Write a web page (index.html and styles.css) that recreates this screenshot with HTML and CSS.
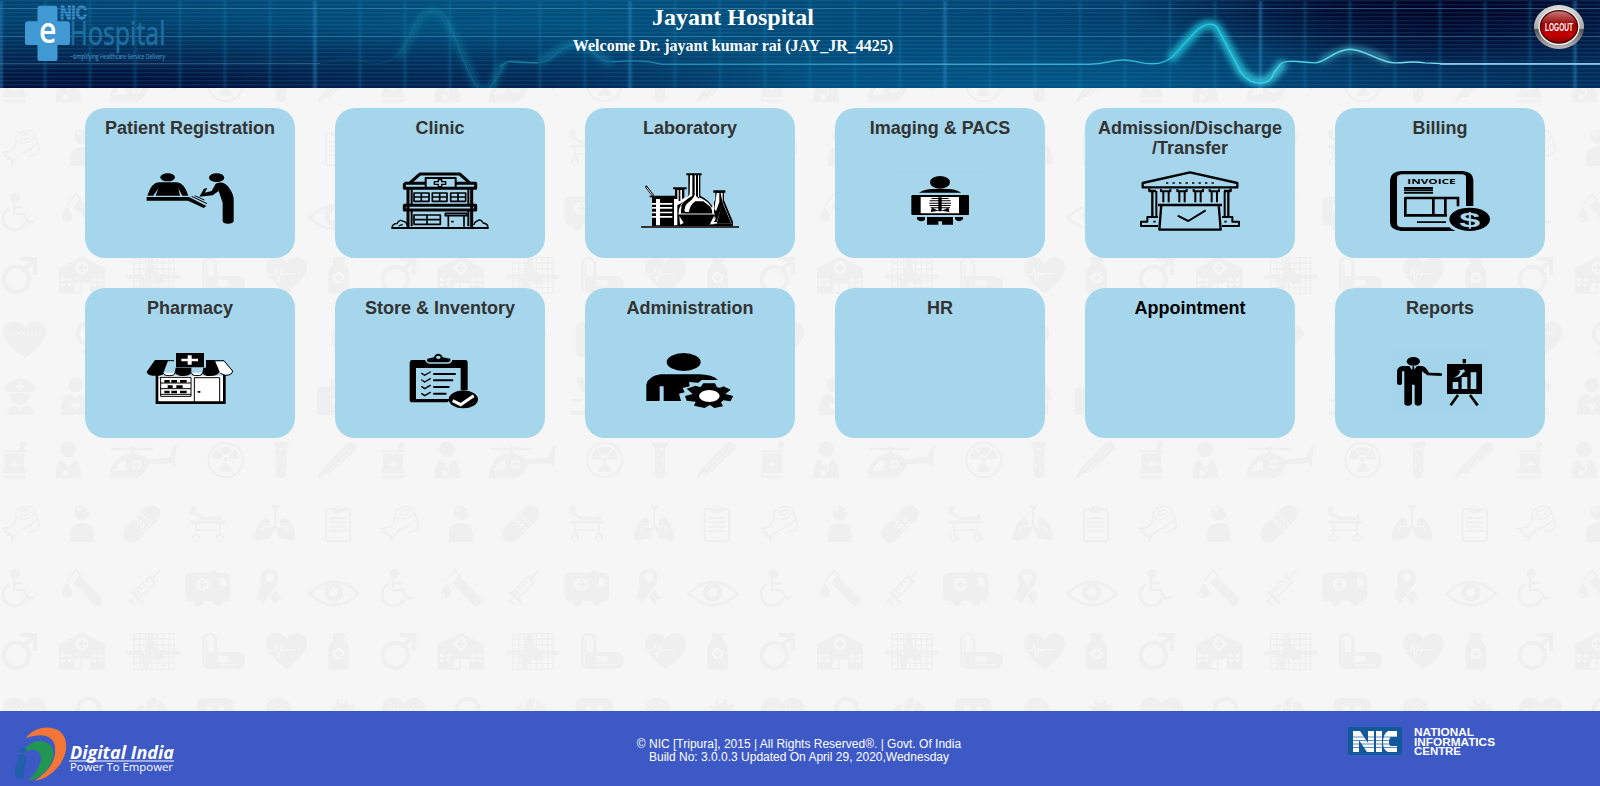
FILE: index.html
```
<!DOCTYPE html>
<html lang="en">
<head>
<meta charset="utf-8">
<title>eHospital</title>
<link rel="stylesheet" href="styles.css">
</head>
<body>
<svg class="backdrop" aria-hidden="true">
  <defs>
    <pattern id="medical" width="1137" height="1128" patternUnits="userSpaceOnUse" patternTransform="translate(0 430) scale(.33333)">
      <g class="ink">
        <!-- mortar, doctor, helicopter, radiation, tube, thermometer -->
        <path d="M8 60H77V67H8ZM12 71H74Q68 100 77 130H7Q16 100 12 71ZM8 137H77V141L73 145H12L8 141ZM57 58L62 51A10 10 0 1 1 72 53L66 60Z"/>
        <circle cx="204" cy="58" r="24"/><path d="M168 145Q164 96 186 88L205 105 222 88Q245 98 242 145Z"/>
        <path d="M334 53H390L396 47 402 53H458V60H402V70Q430 72 441 89L508 82 518 55 531 45 525 90 527 112 512 100 446 103Q435 140 405 145H330V126Q345 72 393 70V60H334Z"/>
        <circle cx="677" cy="90" r="52" class="ring"/><circle cx="677" cy="88" r="7"/>
        <path d="M668 74L656 54Q677 46 698 54L686 74ZM665 88H637Q638 67 650 56L668 77ZM689 88H717Q716 67 704 56L686 77ZM670 100H684L698 122Q677 131 656 122Z"/>
        <path d="M820 37H866V46L859 49V130Q856 145 843 145T827 130V49L820 46Z"/>
        <path d="M954 139L970 113 1041 41Q1056 30 1067 43T1064 64L990 130 974 129 962 144Q954 146 954 139Z"/>
        <!-- plaster roll, surgeon, plaster, stretcher, lungs, clipboard -->
        <g class="line"><ellipse cx="76" cy="248" rx="29" ry="18" transform="rotate(-15 76 248)"/><ellipse cx="76" cy="248" rx="14" ry="7" transform="rotate(-15 76 248)"/><path d="M104 240L119 286Q112 306 84 308M47 258Q49 280 33 291L8 296 20 301 12 306 28 310 23 317 36 316V334Q42 310 70 297T115 266"/></g>
        <path d="M224 244Q223 230 236 228T265 240L257 243 268 249A22 22 0 1 1 224 250ZM210 336V310Q212 279 246 279T281 310V336Z"/>
        <rect x="357" y="255" width="136" height="53" rx="26" transform="rotate(-45 425 281)"/>
        <circle cx="581" cy="236" r="9"/><path d="M568 247L576 241 611 261H657L660 252 667 254V270H606ZM573 272H676V281H573ZM586 282H592V312H586ZM657 282H663V312H657ZM592 298H657V302H592Z"/><circle cx="588" cy="323" r="10" class="line"/><circle cx="660" cy="323" r="10" class="line"/>
        <path d="M812 226H839L828 242V286L840 294V270Q852 257 867 272 884 294 887 326L872 334 858 326Q835 332 832 306L825 291 818 306Q815 332 794 326L778 334 763 326Q766 294 784 272 797 257 810 270V294L822 286V242Z"/>
        <rect x="977" y="237" width="73" height="97" rx="9" class="board"/><path d="M992 236H1001A13 13 0 0 1 1026 236H1035V242Q1028 249 1013 249T992 242Z"/><path d="M987 261H1039V267H987ZM987 274H1039V280H987ZM987 287H1039V293H987ZM987 300H1039V306H987Z"/>
        <!-- wheelchair, tube, syringe, ambulance, ribbon, eye -->
        <circle cx="46" cy="431" r="14"/><path class="limb" d="M42 442V480H71L86 506 104 501M45 460H70M29 463A34 34 0 1 0 76 502"/>
        <path class="line" d="M201 454L229 420 235 429 242 436 221 461"/><path d="M223 461L242 440 304 502Q312 515 300 525 290 532 279 521ZM201 460Q216 478 216 490A15 15 0 0 1 186 490Q186 478 201 460Z"/>
        <path class="line" d="M402 486L449 438 466 457 418 504ZM458 447L479 419M409 495L388 518"/><path d="M389 487L396 484 433 518 427 524ZM385 511L391 508 408 521 402 527ZM443 440L451 434 471 456 464 462Z"/><path class="line" d="M437 450L446 459M427 460L436 469M417 470L426 479M408 478L424 494"/>
        <path d="M571 428H632Q642 410 654 428H677Q690 430 691 448V502Q688 514 671 515A20 20 0 0 0 637 512H612A20 20 0 0 0 580 514Q557 514 556 500V442Q558 429 571 428Z"/><circle cx="596" cy="514" r="14"/><circle cx="654" cy="514" r="14"/>
        <path fill-rule="evenodd" d="M783 464Q774 427 799 418H819Q843 428 833 460L805 498 786 525 785 511 770 506ZM795 435Q795 451 809 458 825 448 823 435 809 425 795 435ZM827 479L845 506 833 507 829 525 808 500Z"/>
        <path class="limb" d="M929 491Q1003 420 1076 491 1003 559 929 491Z"/><circle cx="1001" cy="487" r="29"/>
        <!-- male, hospital, monitor, pills, heart, bottle -->
        <circle cx="49" cy="676" r="38" class="male"/><path d="M62 609H112V662L99 664V631L79 650 70 641 91 621H62Z"/>
        <path d="M177 719V641L246 609 315 641V719H270V687H246V719Z"/>
        <path class="grid" d="M401 611H522V718H401ZM419 611V718M437 611V718M455 611V718M472 611V718M489 611V718M506 611V718M401 627H522M401 645H522M401 663H522M401 681H522M401 700H522"/>
        <path d="M381 662H423L435 675 445 610H459L464 651 475 655 487 664 540 662V674H486L489 690 465 690 455 670 443 718H429L422 674H381Z"/>
        <path d="M606 630Q609 609 629 609T652 630V666H710Q735 668 735 692T710 717H629Q609 718 606 700Z"/>
        <path d="M860 719Q799 672 798 640 801 612 828 609 851 610 860 629 867 610 895 609 918 615 921 640 920 674 860 719Z"/>
        <path d="M999 609H1034V624L1029 628Q1045 636 1047 660V711Q1046 719 1036 719H995Q986 719 985 711V660Q987 636 1003 628L998 624Z"/>
        <!-- heart, female, tablets, tooth, brain, virus -->
        <path d="M75 911Q11 867 9 835 12 804 39 803 65 803 75 820 84 803 111 803 137 810 139 835 136 870 75 911Z"/>
        <circle cx="266" cy="839" r="33" class="male"/><path d="M260 872H272V887H286V897H272V912H260V897H246V887H260Z"/>
        <path d="M405 840Q420 821 433 823L425 861ZM440 822Q449 803 467 801 473 833 447 858L431 868ZM474 811Q492 819 503 840L456 889Z"/>
        <path d="M608 804H682Q701 806 701 825V890Q699 910 678 910H610Q590 908 590 889V824Q591 806 608 804Z"/>
        <path d="M799 838Q797 806 835 803 872 808 873 840L862 868 859 902H821V870Q800 862 799 838Z"/>
        <circle cx="1032" cy="857" r="37"/><path class="limb" d="M1012 808L1018 830M1040 808L1037 830M1062 821L1050 840M995 829L1010 843M1071 850H1050M995 858H1014M1005 892L1016 876M1055 893L1044 875"/>
        <!-- nurse, carer, patient, microscope, scales, bag -->
        <g transform="translate(0 -22)">
          <path d="M12 1018Q60 975 108 1018L98 1036H22ZM30 1040H90Q88 1074 60 1074T30 1040ZM20 1104Q22 1080 45 1076L60 1088 75 1076Q100 1082 100 1104Z"/>
          <circle cx="227" cy="1015" r="22"/><path d="M182 1104Q181 1040 213 1042L227 1055 241 1042Q275 1043 273 1104Z"/>
          <circle cx="414" cy="1017" r="23"/><path d="M377 1104V1070Q381 1042 414 1042T451 1070V1104Z"/>
          <path d="M591 995L610 990 625 1032 607 1040ZM627 1030Q660 1050 632 1091H650V1104H576V1091H609Q638 1072 616 1044ZM578 1057H608V1066H578Z"/>
          <path d="M760 998Q812 980 862 998L882 1061H838V1068H870V1104H750V1068H786V1061H738Z"/>
          <path d="M965 1020H989V1004Q992 994 1004 994H1039Q1051 994 1054 1004V1020H1077Q1085 1023 1085 1030V1096Q1082 1105 1074 1105H960Q950 1103 950 1095V1031Q952 1022 965 1020ZM1002 1020H1041V1007H1002Z"/>
        </g>
      </g>
      <g class="paper">
        <path d="M40 91H46V100H55V106H46V115H40V106H31V100H40ZM342 124Q355 93 378 90V119Z"/><circle cx="410" cy="103" r="14"/><circle cx="196" cy="129" r="8"/><path class="cut" d="M187 94L204 110 219 94M210 109L211 120 197 129"/>
        <path d="M833 55H853V60H833Z"/><circle cx="839" cy="75" r="3"/><circle cx="851" cy="90" r="3"/><circle cx="834" cy="104" r="3"/><circle cx="849" cy="119" r="3"/>
        <path class="cut cut-fine" d="M982 113L1040 56M991 122L1050 64"/><path class="cut" d="M389 250L456 315M405 233L474 299"/><path class="dots" d="M402 272L436 307M411 263L446 298M420 254L455 289"/>
        <circle cx="236" cy="238" r="7"/><circle cx="1013" cy="233" r="5"/><path class="cut" d="M784 304Q786 284 815 291M866 304Q864 284 835 291"/>
        <circle cx="607" cy="463" r="20"/><path d="M664 441Q681 441 681 468H660V449ZM199 497Q194 493 191 487L190 494Q193 502 201 502Z"/><circle cx="1001" cy="486" r="14"/>
        <circle cx="246" cy="641" r="20"/><path d="M183 672H195V681H183ZM202 672H214V681H202ZM183 687H195V696H183ZM202 687H214V696H202ZM277 672H289V681H277ZM296 672H308V681H296ZM277 687H289V696H277ZM296 687H308V696H296ZM227 687H242V713H222Z"/>
        <path d="M614 666V625Q618 616 629 616T643 625V666H623V632H617V710H614ZM652 677H685V697H652ZM652 703H714V707H652Z"/><path class="cut" d="M804 662H821L828 642 835 687 843 652 850 665 857 659H888"/><circle cx="1016" cy="671" r="17"/>
        <path class="dots" d="M28 838H122"/><path d="M619 827H636V884H619ZM655 827H672V884H655Z"/><path class="cut cut-fine" d="M806 828L820 817 831 826 846 815 860 830M808 842L820 832 833 842 846 832 864 846"/>
        <path transform="translate(0 -22)" d="M227 1092L213 1075Q214 1065 221 1068L227 1073 234 1067Q244 1067 240 1077ZM1009 1044H1025V1057H1038V1073H1025V1086H1009V1073H996V1057H1009ZM773 1012H848V1046H773ZM56 1007H64V1015H72V1023H64V1031H56V1023H48V1015H56Z"/>
      </g>
      <path class="ink" d="M407 93H413V100H420V107H413V114H407V107H400V100H407ZM603 450H611V459H620V467H611V477H603V467H594V459H603ZM242 629H250V637H258V645H250V653H242V645H234V637H242ZM1013 661H1019V668H1026V674H1019V681H1013V674H1006V668H1013Z"/><circle class="ink" cx="989" cy="473" r="7"/>
    </pattern>
  </defs>
  <rect width="100%" height="100%" fill="url(#medical)"/>
</svg>

<header class="masthead">
  <svg class="wave" viewBox="0 0 1600 91" preserveAspectRatio="none" aria-hidden="true">
    <defs>
      <linearGradient id="base"><stop offset="0" stop-color="#004370"/><stop offset=".35" stop-color="#00507d"/><stop offset=".6" stop-color="#004776"/><stop offset=".76" stop-color="#003865"/><stop offset=".9" stop-color="#001d49"/><stop offset="1" stop-color="#002450"/></linearGradient>
      <radialGradient id="shadeA" gradientUnits="userSpaceOnUse" cx="0" cy="0" r="1" gradientTransform="translate(110 105) scale(520 90)"><stop offset="0" stop-color="#00002e" stop-opacity=".95"/><stop offset=".35" stop-color="#00062f" stop-opacity=".72"/><stop offset="1" stop-color="#00153f" stop-opacity="0"/></radialGradient>
      <radialGradient id="shadeB" gradientUnits="userSpaceOnUse" cx="0" cy="0" r="1" gradientTransform="translate(1430 -5) scale(300 75)"><stop offset="0" stop-color="#000022"/><stop offset=".4" stop-color="#000022" stop-opacity=".7"/><stop offset="1" stop-color="#000022" stop-opacity="0"/></radialGradient>
      <radialGradient id="shadeC" gradientUnits="userSpaceOnUse" cx="0" cy="0" r="1" gradientTransform="translate(520 105) scale(300 80)"><stop offset="0" stop-color="#001846" stop-opacity=".9"/><stop offset="1" stop-color="#001846" stop-opacity="0"/></radialGradient>
      <radialGradient id="glow" gradientUnits="userSpaceOnUse" cx="0" cy="0" r="1" gradientTransform="translate(1100 105) scale(430 80)"><stop offset="0" stop-color="#005c8c"/><stop offset="1" stop-color="#005c8c" stop-opacity="0"/></radialGradient>
      <radialGradient id="dusk" gradientUnits="userSpaceOnUse" cx="0" cy="0" r="1" gradientTransform="translate(1450 105) scale(350 60)"><stop offset="0" stop-color="#003c6b" stop-opacity=".85"/><stop offset="1" stop-color="#003c6b" stop-opacity="0"/></radialGradient>
      <linearGradient id="pulse" gradientUnits="userSpaceOnUse" x1="300" x2="1600" y1="0" y2="0"><stop offset="0" stop-color="#1787a8" stop-opacity=".3"/><stop offset=".15" stop-color="#1799b5" stop-opacity=".65"/><stop offset=".5" stop-color="#3d9fc9"/><stop offset=".7" stop-color="#22c7e0"/><stop offset=".85" stop-color="#79e4ef"/><stop offset="1" stop-color="#65b5e0"/></linearGradient>
      <pattern id="rules" width="10" height="4.136" y="0.2" patternUnits="userSpaceOnUse"><rect width="10" height="1.2" fill="#4a8fb8" opacity=".22"/></pattern>
      <filter id="soft" x="-10%" y="-50%" width="120%" height="200%"><feGaussianBlur stdDeviation="3.2"/></filter>
      <filter id="grid-soft" filterUnits="userSpaceOnUse" x="0" y="0" width="1600" height="91"><feGaussianBlur stdDeviation="1 0"/></filter>
    </defs>
    <rect width="1600" height="91" fill="url(#base)"/>
    <rect width="1600" height="91" fill="url(#glow)"/><rect width="1600" height="91" fill="url(#shadeA)"/><rect width="1600" height="91" fill="url(#shadeB)"/><rect width="1600" height="91" fill="url(#shadeC)"/><rect width="1600" height="91" fill="url(#dusk)"/>
    <rect width="1600" height="91" fill="url(#rules)"/>
    <path d="M0 8.800H1600M0 37.700H1600M0 65.700H320" stroke="#5ca2c8" opacity=".4"/>
    <g filter="url(#grid-soft)">
      <path class="columns" d="M45 1V91M90 1V91M135 1V91M180 1V91M225 1V91M270 1V91M360 1V91M405 1V91M450 1V91M495 1V91M540 1V91M585 1V91M675 1V91M720 1V91M765 1V91M810 1V91M855 1V91M900 1V91M990 1V91M1035 1V91M1080 1V91M1125 1V91M1170 1V91M1215 1V91M1305 1V91M1350 1V91M1395 1V91M1440 1V91M1485 1V91M1530 1V91"/>
      <path class="columns-major" d="M1 1V91M315 1V91M630 1V91M945 1V91M1260.500 1V91M1575 1V91"/>
    </g>
    <g fill="none" stroke="url(#pulse)">
      <path stroke-width="7" opacity=".65" filter="url(#soft)" d="M398 60C412 42 418 14 430 12S448 22 466 64L478 93H490L503 65M540 64C555 55 562 46 577 46S597 62 612 64"/>
      <path stroke-width="9" opacity=".85" filter="url(#soft)" d="M1170 62L1198 30Q1208 22 1217 28L1241 74Q1260 94 1275 76L1284 64"/>
      <path stroke-width="5" opacity=".65" filter="url(#soft)" d="M1320 64Q1340 50 1354 51T1390 64"/>
      <path stroke-width="1" opacity=".55" d="M318 65.500C334 64 335 61 348 61S364 65.500 378 65.500C410 65.500 412 12 426 12H440C450 12 464 78 480 93M488 93C496 84 504 65 509 64C516 61 522 65 538 65C554 65 560 46 576 46S596 65 612 64"/>
      <path stroke-width="1.500" d="M500 69Q506 63 511 63.500 522 65 538 65M612 64Q642 61 662 66.500H1090C1108 66 1110 62 1123 62S1139 66 1152 66Q1166 66 1174 57L1195 33Q1203 25 1210 25T1219 32L1241 75Q1249 86 1260 86T1274 75L1280 67Q1284 63 1290 63.500C1300 63 1305 65 1315 65S1335 51 1350 51S1380 65 1395 65S1410 63 1425 65T1445 66H1600"/>
    </g>
    <path d="M1440 66H1600" stroke="#83c8ee" stroke-width="1.800"/>
  </svg>
  <div class="masthead-bar">
    <svg class="logo" viewBox="20 0 150 66" preserveAspectRatio="none" role="img" aria-label="NIC eHospital">
      <path fill="#4099d3" d="M40 6H55Q57.500 6 57.500 8.500V22H67Q70 22 70 25V44Q70 46.500 67 46.500H57.500V60Q57.500 63 55 63H40Q37.500 63 37.500 60V46.500H28Q25 46.500 25 44V25Q25 22 28 22H37.500V8.500Q37.500 6 40 6Z"/>
      <text x="39" y="44" class="logo-e" textLength="17.500" lengthAdjust="spacingAndGlyphs">e</text>
      <text x="60" y="19.500" class="logo-nic" textLength="27" lengthAdjust="spacingAndGlyphs">NIC</text>
      <path d="M60 8.300H88M60 11.300H88M60 14.300H88M60 17.300H88" stroke="#003867" stroke-width=".5"/>
      <text x="69.500" y="46.800" class="logo-name" textLength="96" lengthAdjust="spacingAndGlyphs">Hospital</text>
      <text x="70" y="60.500" class="logo-tag" textLength="95" lengthAdjust="spacingAndGlyphs">~simplifying Healthcare Service Delivery</text>
    </svg>
    <div class="welcome">
      <h1>Jayant Hospital</h1>
      <p>Welcome Dr. jayant kumar rai (JAY_JR_4425)</p>
    </div>
    <svg class="logout" viewBox="0 0 50 45" preserveAspectRatio="none" role="img" aria-label="Logout">
      <defs>
        <linearGradient id="metal" x2="0" y2="1"><stop offset="0" stop-color="#ddd"/><stop offset=".53" stop-color="#aaa"/><stop offset=".56" stop-color="#555"/><stop offset="1" stop-color="#bbb"/></linearGradient>
        <linearGradient id="red" x2="0" y2="1"><stop offset="0" stop-color="#c87878"/><stop offset=".35" stop-color="#a01818"/><stop offset=".4" stop-color="#900"/><stop offset=".75" stop-color="#c50000"/><stop offset="1" stop-color="#8a0000"/></linearGradient>
      </defs>
      <ellipse cx="25" cy="22.500" rx="25" ry="22.500" fill="url(#metal)"/>
      <ellipse cx="25" cy="22.500" rx="20.500" ry="18.500" fill="#fff"/>
      <ellipse cx="25" cy="22.300" rx="19.300" ry="17.300" fill="#400"/>
      <ellipse cx="25" cy="22.300" rx="18" ry="16" fill="url(#red)"/>
      <text x="11" y="27" textLength="28" lengthAdjust="spacingAndGlyphs">LOGOUT</text>
    </svg>
  </div>
</header>

<main class="tiles">
  <a class="tile"><h2>Patient Registration</h2>
    <svg viewBox="210 213 300 180"><ellipse cx="293" cy="232" rx="22" ry="12"/><path d="M232 287Q245 247 267 247H321Q342 248 355 287H337L325 265 330 287H257L265 265 250 287ZM230 291H357L409 318 401 324 354 302H230Z"/><ellipse cx="440" cy="233" rx="23" ry="13"/><path d="M437 251Q460 240 476 262T491 300V363Q489 371 474 371 459 371 458 363V308L446 273 428 286 388 290 402 266 412 264 404 278 425 273Z"/><path d="M365 289L411 311M374 287L403 300" fill="none" stroke="#000" stroke-width="3"/></svg></a>
  <a class="tile"><h2>Clinic</h2>
    <svg viewBox="960 213 300 180" class="draw"><path stroke-width="9" d="M1018 250L1050 222H1169L1201 250M1003 250H1065M1158 250H1217V265H1003V250M1014 268V381M1205 268V381M1003 316H1217V330H1003Z"/><path stroke-width="6" d="M1067 263V234H1157V263M1025 268V314M1195 268V314M1025 332V379M1195 332V379M964 384H1256"/><path stroke-width="5" d="M1032 279H1077V304H1032ZM1087 279H1131V304H1087ZM1142 279H1187V304H1142ZM1054 279V304M1109 279V304M1164 279V304M1032 291H1077M1087 291H1131M1142 291H1187M1032 345H1111V373H1032ZM1071 345V373M1032 359H1111M1126 340H1190V347H1126ZM1135 347V380M1182 347V380M1144 365H1151"/><path stroke-width="4" d="M1105 239H1115V245H1127V253H1115V260H1105V253H1093V245H1105ZM966 381Q970 369 981 371 988 356 999 364 1007 363 1012 375M1211 375Q1215 364 1222 363 1232 355 1239 369 1253 371 1254 381M986 378L998 373"/></svg></a>
  <a class="tile"><h2>Laboratory</h2>
    <svg viewBox="210 213 300 180"><path d="M349 220H395V226H391V287Q416 300 428 320L436 296V278H430V271H466V278H462V301L489 365V378H507V384H214V378H246V292H239V287H315V268H309V262H350V268H343V300Q354 290 355 286V226H349Z"/><path class="white" d="M360 226H367V288Q341 300 331 322 351 312 364 300 372 292 374 284V226H378V288L387 296V226H384V290Q414 302 426 323L432 307V342H326Q325 316 344 304L322 316V270H326V303H331V270H336V297L355 289 359 283ZM258 297H270V376H258ZM246 309H307V314H246ZM246 321H307V326H246ZM246 335H307V340H246ZM246 348H307V353H246ZM312 297H322V376H312ZM440 279H448V306L438 334 433 327ZM452 279H458V305L485 371H430L418 374Q435 360 434 346 440 361 430 366H440L458 310Z"/><path d="M333 341Q330 306 360 304L344 332 346 336 366 336 400 304 421 320Q428 330 427 341ZM328 345H432L418 373H350ZM440 371L457 306 484 371Z"/><path class="white" d="M362 304Q345 310 343 333L357 336Q360 314 376 304ZM328 348L341 369 330 374ZM432 348L421 370 431 374Z"/><path d="M357 336Q360 314 376 304H398L427 341H345V336Z"/><path fill="none" stroke="#111" stroke-width="7" d="M227 258L250 288"/><path fill="none" stroke="#ddd" stroke-width="3" d="M230 262L248 286M325 342H435"/><path fill="none" stroke="#444" stroke-width="5" d="M214 381H507"/></svg></a>
  <a class="tile"><h2>Imaging &amp; PACS</h2>
    <svg viewBox="960 213 300 180"><rect x="961" y="214" width="298" height="178" rx="30" fill="none" stroke="#a2d2e8" stroke-width="2"/><ellipse cx="1110" cy="247" rx="30" ry="19"/><path d="M1047 278Q1065 267 1087 267H1135Q1158 268 1174 278ZM1026 285H1195Q1197 285 1197 288V343L1195 345H1026L1024 343V288ZM1041 351H1065V359Q1059 364 1053 364T1041 358ZM1071 351H1149V374H1116V364H1105V374H1071ZM1155 351H1179V358Q1172 364 1167 364T1155 358Z"/><path class="white" d="M1052 291H1167V340H1052Z"/><path d="M1105 292H1115V334H1105ZM1084 294H1136V297H1084ZM1079 301H1142V304H1079ZM1078 308H1143V311H1078ZM1079 315H1142V318H1079ZM1082 322H1140V325H1082ZM1084 327Q1088 323 1094 327L1105 332 1083 336ZM1137 327Q1133 323 1127 327L1115 332 1138 336Z"/></svg></a>
  <a class="tile"><h2>Admission/Discharge<br>/Transfer</h2>
    <svg viewBox="210 213 300 180" class="draw"><path stroke-width="7" stroke-linejoin="miter" d="M218 262V249L360 217 502 249V262ZM238 266V273H258M247 273V348M482 266V273H462M475 273V348M274 313L268 389H452L446 313M264 315H456"/><path stroke-width="6" d="M273 267V274H301V267M280 274V307M296 274V307M322 267V274H350V267M328 274V307M344 274V307M371 267V274H399V267M376 274V307M392 274V307M419 267V274H447V267M425 274V307M441 274V307M259 273V348M464 273V348M264 351H232V365H213V378H264M456 351H487V365H507V378H456M323 347L355 363 407 331"/><path stroke-width="5" stroke-dasharray="7 12.500" d="M288 249H432"/><path stroke-width="5" d="M250 365H257M463 365H470"/></svg></a>
  <a class="tile"><h2>Billing</h2>
    <svg viewBox="960 213 300 180"><path fill-rule="evenodd" d="M994 213H1178Q1210 216 1210 240V318H1188V232Q1188 223 1174 223H998Q981 223 981 234V372Q982 382 998 382H1139Q1144 389 1157 393H994Q960 390 960 366V240Q962 215 994 213Z"/><path d="M1002 261H1089V267H1002ZM1002 268H1089V273H1002ZM1002 275H1089V281H1002ZM1041 364H1128V369H1041Z"/><path fill="none" stroke="#000" stroke-width="8" d="M1006 294H1164V319M1006 292V346H1131M1090 296V346M1126 296V346M1164 292V319"/><ellipse cx="1199" cy="358" rx="61" ry="35"/><text x="1012" y="251" class="invoice" textLength="145" lengthAdjust="spacingAndGlyphs">INVOICE</text><text x="1168" y="380" class="dollar" textLength="63" lengthAdjust="spacingAndGlyphs">$</text></svg></a>
  <a class="tile"><h2>Pharmacy</h2>
    <svg viewBox="210 213 300 180"><path class="white" d="M262 287H462V367H262Z"/><path d="M318 219H402V262H318ZM255 240H295L278 284Q264 289 248 287 232 285 230 275ZM317 263H364V279Q357 288 340 288T314 278ZM408 240H434L449 276Q442 288 421 288T397 278L400 263H408Z"/><path class="white" d="M353 226H365V236H384V244H365V254H353V244H334V236H353ZM437 245H461L486 273Q481 284 465 284L453 282ZM281 278H313Q309 286 297 286T281 282ZM365 278H396Q391 286 381 286T365 280Z"/><path fill="none" stroke="#000" stroke-width="3" d="M294 242H312M432 242H462L488 273Q487 286 466 286L451 280M280 279Q281 287 298 287T314 279M365 279Q365 287 381 287T397 279M270 295V292H363V349H272V292M373 368V293H449V368M271 309H363M271 326H363M271 343H363"/><path fill="none" stroke="#000" stroke-width="8" d="M261 285V368H463V285"/><path d="M283 300H299V308H283ZM304 300H321V308H304ZM330 300H350V308H330ZM293 316H308V324H293ZM319 316H338V324H319ZM283 332H299V340H283ZM304 332H321V340H304ZM330 332H350V340H330ZM383 333H391V338H383Z"/></svg></a>
  <a class="tile"><h2>Store &amp; Inventory</h2>
    <svg viewBox="960 213 300 180"><path fill-rule="evenodd" d="M1026 240H1065Q1070 251 1079 251H1132Q1145 251 1147 240H1186Q1193 240 1193 248V330H1172V264H1038V357H1143L1132 367H1028Q1019 367 1019 359V248Q1019 241 1026 240ZM1072 236L1092 232Q1095 221 1105 221T1118 232L1141 236V244L1134 247H1076L1071 243ZM1098 232A7 5 0 1 0 1112 232 7 5 0 1 0 1098 232Z"/><g fill="none" stroke="#000" stroke-width="6" stroke-linecap="round"><path d="M1092 282H1155M1092 301H1147M1092 321H1136M1092 341H1127"/><path stroke-width="4" d="M1055 280L1064 286 1081 276M1055 300L1064 306 1081 296M1055 320L1064 326 1081 316M1055 341L1064 347 1081 337"/></g><ellipse cx="1180" cy="358" rx="44" ry="27"/><path fill="none" stroke="#fff" stroke-width="9" d="M1148 362L1172 374 1211 347"/></svg></a>
  <a class="tile"><h2>Administration</h2>
    <svg viewBox="210 213 300 180"><ellipse cx="341" cy="246" rx="51" ry="27"/><path d="M229 363V314Q236 287 272 283H386Q428 284 444 300H395L385 308 357 306 359 319 338 324 344 337 327 341 333 363H281V319H269V363Z"/><path d="M400 310H435L441 322Q453 325 460 319L482 329 466 342 490 348 481 364 460 361 453 367 459 379 433 384 420 375 404 384 372 377 377 365 350 362 345 348 368 342 350 326 377 317 391 322Z"/><ellipse class="white" cx="418" cy="348" rx="31" ry="18"/></svg></a>
  <a class="tile"><h2>HR</h2></a>
  <a class="tile tile-active"><h2>Appointment</h2></a>
  <a class="tile"><h2>Reports</h2>
    <svg viewBox="210 213 300 180"><rect x="216" y="214" width="292" height="178" fill="#9fd0e6" opacity=".35"/><ellipse cx="280" cy="244" rx="20" ry="13"/><path d="M248 258H268L279 275 291 258H306Q317 259 327 278L364 279Q369 283 364 288L322 286 306 274V370Q304 377 295 377 284 377 284 370V314H276V370Q275 377 264 377 253 377 253 370V274H246V308Q246 315 238 315 231 315 231 308V274Q232 260 248 258ZM278 258H282L284 272 280 277 276 272ZM381 252H486V342H381ZM428 237H438V250H428Z"/><path class="sky" d="M398 306H415V327H398ZM425 291H442V327H425ZM452 277H469V327H452ZM401 293Q418 287 421 274L416 272 432 268 435 275 429 278Q424 291 401 293Z"/><path fill="none" stroke="#000" stroke-width="8" d="M414 345L392 376M450 345L473 376"/></svg></a>
</main>

<footer class="footer">
  <svg class="digital" viewBox="0 0 180 75" role="img" aria-label="Digital India">
    <path fill="#f47636" d="M26 27C32 18 46 13 58 19C70 27 68 44 58 56Q48 68 34 70Q53 58 55 43C57 27 47 20 26 27Z"/>
    <path fill="#219653" d="M22 43C29 29 43 26 52 36C57 48 47 66 28 70Q40 58 41 48C41 38 32 36 22 43Z"/>
    <path fill="#245fae" d="M17 44Q27 43 27 48L23 68Q9 69 18 49ZM22 42A4 2.500 0 1 1 23 42Z"/>
    <text x="70" y="48" class="digital-name" textLength="104" lengthAdjust="spacingAndGlyphs">Digital India</text>
    <path stroke="#fff" d="M69 50H174"/>
    <text x="70" y="60" class="digital-tag" textLength="103" lengthAdjust="spacingAndGlyphs">Power To Empower</text>
  </svg>
  <p class="legal">© NIC [Tripura], 2015 | All Rights Reserved®. | Govt. Of India<br>Build No: 3.0.0.3 Updated On April 29, 2020,Wednesday</p>
  <svg class="nic" viewBox="0 0 150 30" role="img" aria-label="National Informatics Centre">
    <rect width="54" height="28" rx="2" fill="#12599b"/>
    <path fill="#fff" d="M5 4H12L20 16V4H26V25H19L11 13V25H5ZM28 4H34V25H28ZM40 4H49V10H43Q41 11 41 15T43 19H49V25H40Q35 23 35 15T40 4Z"/>
    <path d="M4 10H50M4 13.500H50M4 17H50M4 20.500H50" stroke="#12599b" stroke-width=".7"/>
    <text x="66" y="9" textLength="60" lengthAdjust="spacingAndGlyphs">NATIONAL</text>
    <text x="66" y="18.600" textLength="81" lengthAdjust="spacingAndGlyphs">INFORMATICS</text>
    <text x="66" y="28" textLength="47" lengthAdjust="spacingAndGlyphs">CENTRE</text>
  </svg>
</footer>
</body>
</html>
```
FILE: styles.css
```
* { box-sizing: border-box; }
body {
  margin: 0;
  height: 786px;
  display: grid;
  grid-template-rows: 88px 1fr 75px;
  position: relative;
  overflow: hidden;
  background: #f6f6f6;
  font-family: "Liberation Sans", Arial, sans-serif;
}
h1, h2, p { margin: 0; }

.backdrop { position: absolute; inset: 0; width: 100%; height: 100%; z-index: -1; }
.ink { fill: #efefef; }
.paper { fill: #f6f6f6; }
.ring, .line, .limb, .male, .board, .grid { fill: none; stroke: #efefef; }
.ring { stroke-width: 6; }
.line { stroke-width: 5; }
.limb { stroke-width: 8; }
.male { stroke-width: 12; }
.board { stroke-width: 6; }
.grid { stroke-width: 4; }
.cut, .dots { fill: none; stroke: #f6f6f6; }
.cut { stroke-width: 4; }
.cut-fine { stroke-width: 2.5; }
.dots { stroke-width: 6; stroke-dasharray: 6 7; }

.masthead { position: relative; overflow: hidden; background: #003b69; }
.wave { position: absolute; inset: 0; width: 100%; height: 100%; }
.columns { stroke: #2386b8; stroke-width: 3; opacity: .27; }
.columns-major { stroke: #3390cd; stroke-width: 3; opacity: .5; }
.masthead-bar {
  position: relative;
  display: grid;
  grid-template-columns: 150px 1fr 50px;
  padding: 0 16px 0 20px;
}
.logo { width: 150px; height: 64px; overflow: visible; }
.logo text { font-family: "Open Sans", sans-serif; }
.logo .logo-e { font-size: 37px; font-weight: 600; fill: #fff; }
.logo .logo-nic { font-family: "Liberation Sans", sans-serif; font-size: 19px; font-weight: 700; fill: #3b8fca; stroke: #3b8fca; stroke-width: 1; }
.logo .logo-name { font-size: 33px; fill: #1d70a1; stroke: #1d70a1; stroke-width: .6; }
.logo .logo-tag { font-size: 7px; fill: #3f8fc2; stroke: #3f8fc2; stroke-width: .15; }
.welcome {
  padding: 3px 238px 0 0;
  color: #fff;
  text-align: center;
  font-family: "Liberation Serif", "Times New Roman", serif;
}
.welcome h1 { font-size: 24px; line-height: 28px; }
.welcome p { margin-top: 6px; font-size: 16px; line-height: 18px; font-weight: 700; }
.logout { width: 50px; height: 44px; margin-top: 5px; overflow: visible; }
.logout text { font: 700 12px "Liberation Sans", sans-serif; fill: #fff; }

.tiles {
  display: grid;
  grid-template-columns: repeat(6, 210px);
  grid-auto-rows: 150px;
  gap: 30px 40px;
  padding: 20px 0 0 85px;
}
.tile {
  display: flex;
  flex-direction: column;
  align-items: center;
  justify-content: space-between;
  padding: 10px 5px 27px;
  border-radius: 20px;
  background: #a6d6ec;
  color: #333;
  text-align: center;
}
.tile-active { color: #000; }
.tile h2 { font-size: 18px; line-height: 20px; }
.tile svg { width: 100px; height: 60px; }
.draw path { fill: none; stroke: #000; stroke-linejoin: round; }
.white { fill: #fff; }
.sky { fill: #a6d6ec; }
.invoice { font: 700 20px "Open Sans", sans-serif; }
.dollar { font: 700 63px "Liberation Sans", sans-serif; fill: #a6d6ec; }

.footer {
  display: grid;
  grid-template-columns: 300px 998px 1fr;
  justify-items: center;
  background: #3d59c6;
}
.digital { width: 180px; height: 75px; justify-self: start; }
.digital text { font-family: "Open Sans", sans-serif; fill: #fff; }
.digital .digital-name { font-size: 17px; font-weight: 700; font-style: italic; }
.digital .digital-tag { font-size: 10.5px; }
.legal { padding-top: 27px; color: #fff; font-size: 12px; line-height: 13px; text-align: center; }
.nic { width: 150px; height: 30px; margin: 16px 0 0 50px; justify-self: start; overflow: visible; }
.nic text { font: 700 10px "Liberation Sans", sans-serif; fill: #fff; }
```
